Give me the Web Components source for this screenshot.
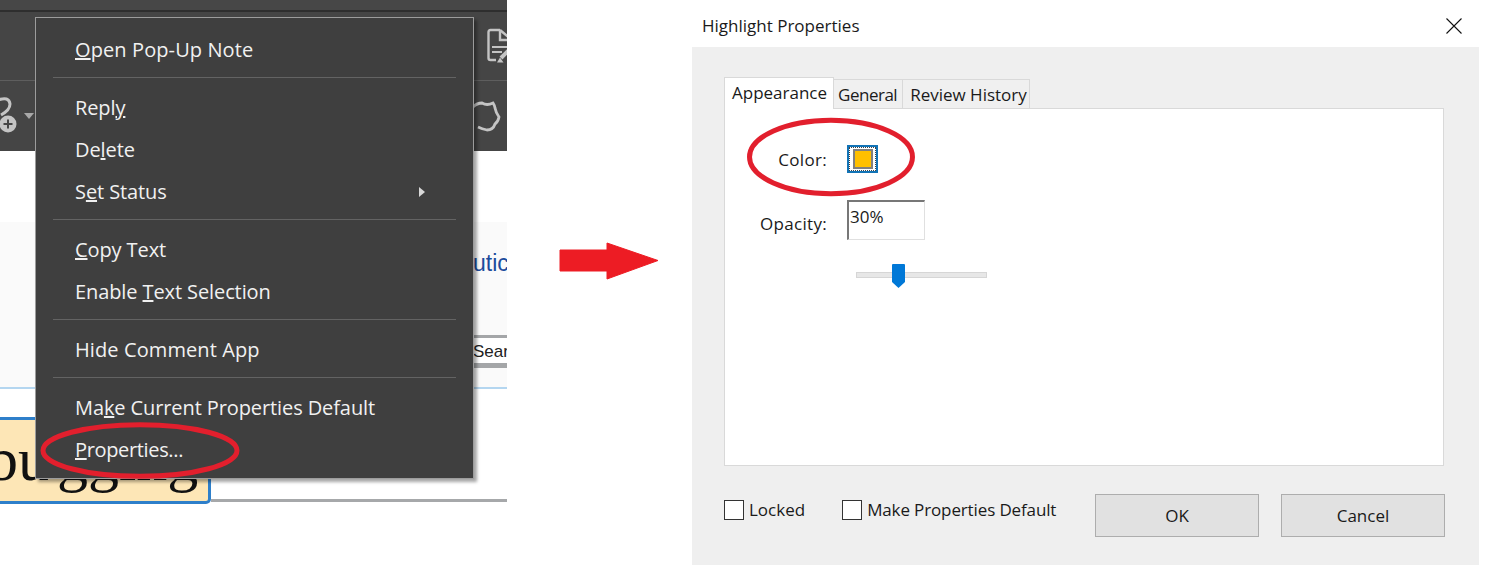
<!DOCTYPE html>
<html>
<head>
<meta charset="utf-8">
<title>Highlight Properties</title>
<style>
  html, body { margin: 0; background: #fff; }
  body { width: 1495px; height: 578px; overflow: hidden; font-family: "Open Sans", "Liberation Sans", sans-serif; }
</style>
</head>
<body>
<app-shell>
  <pdf-backdrop slot="left">
    <context-menu>
      <menu-item style="letter-spacing:.1px"><u>O</u>pen Pop-Up Note</menu-item>
      <menu-separator></menu-separator>
      <menu-item>Repl<u>y</u></menu-item>
      <menu-item>De<u>l</u>ete</menu-item>
      <menu-item submenu>S<u>e</u>t Status</menu-item>
      <menu-separator></menu-separator>
      <menu-item><u>C</u>opy Text</menu-item>
      <menu-item>Enable <u>T</u>ext Selection</menu-item>
      <menu-separator></menu-separator>
      <menu-item style="letter-spacing:.1px">Hide Comment App</menu-item>
      <menu-separator></menu-separator>
      <menu-item>Ma<u>k</u>e Current Properties Default</menu-item>
      <menu-item style="letter-spacing:-.35px"><u>P</u>roperties...</menu-item>
    </context-menu>
    <callout-ellipse style="left:40px;top:423px;width:200px;height:55px"></callout-ellipse>
  </pdf-backdrop>
  <flow-arrow slot="middle"></flow-arrow>
  <properties-dialog slot="right" heading="Highlight Properties">
    <dialog-tab slot="tabs" active>Appearance</dialog-tab>
    <dialog-tab slot="tabs" style="padding:0 5px 0 4px;letter-spacing:-.5px">General</dialog-tab>
    <dialog-tab slot="tabs" style="padding:0 2px 0 7px">Review History</dialog-tab>
    <appearance-pane slot="pane"></appearance-pane>
    <check-box slot="footer" style="margin-right:37px">Locked</check-box>
    <check-box slot="footer" style="letter-spacing:-.13px">Make Properties Default</check-box>
    <push-button slot="actions">OK</push-button>
    <push-button slot="actions">Cancel</push-button>
  </properties-dialog>
</app-shell>

<script>
class AppShell extends HTMLElement {
  constructor() {
    super();
    this.attachShadow({ mode: "open" });
    this.shadowRoot.innerHTML = `
      <style>
        :host { display: flex; width: 1495px; height: 578px; color: #1a1a1a; }
        .middle { width: 185px; }
        .right { width: 787px; }
      </style>
      <slot name="left"></slot>
      <div class="middle"><slot name="middle"></slot></div>
      <div class="right"><slot name="right"></slot></div>
    `;
  }
}

class PdfBackdrop extends HTMLElement {
  constructor() {
    super();
    this.attachShadow({ mode: "open" });
    this.shadowRoot.innerHTML = `
      <style>
        :host { display: block; position: relative; width: 507px; height: 578px; overflow: hidden; flex: none; }
        .strip { height: 10px; background: #474747; border-bottom: 2px solid #2e2e2e; }
        .bar { box-sizing: border-box; display: flex; justify-content: space-between; align-items: center; background: #454545; }
        .bar-top { height: 69px; border-bottom: 1px solid #5e5e5e; }
        .bar-bottom { height: 70px; }
        .bar-top svg { margin-left: auto; margin-right: -12px; flex: none; }
        .left-tool { display: flex; align-items: center; gap: 7px; }
        .caret { width: 0; height: 0; border: 5px solid transparent; border-top: 6px solid #a8a8a8; border-bottom: 0; }
        .band { box-sizing: border-box; height: 167px; margin-top: 71px; padding: 26px 0 0 473px; background: #fafafa; border-bottom: 2px solid #b4d6f0; overflow: hidden; }
        .link { display: block; font: 23px/30px "Liberation Sans", sans-serif; color: #1d4c9c; white-space: nowrap; }
        .search { box-sizing: border-box; height: 33px; margin: 57px 0 0 0; border-top: 3px solid #a4a6a8; border-bottom: 5px solid #a4a6a8; font: 17px/28px "Liberation Sans", sans-serif; color: #222; white-space: nowrap; background: #fff; overflow: hidden; }
        .word-row { display: flex; align-items: flex-end; margin-top: 28px; }
        .word { box-sizing: border-box; width: 211px; height: 87px; padding-top: 8px; background: #fde6b6; border: 3px solid #2e7fca; border-left: 0; border-radius: 0 0 5px 0; overflow: hidden; font: 62px/1 "Liberation Serif", serif; color: #111; text-indent: -13px; white-space: nowrap; }
        .word span { margin-right: 8px; }
        .rule { flex: 1; height: 3px; background: #a6a8aa; margin-bottom: 2px; }
      </style>
      <div class="strip"></div>
      <div class="bar bar-top">
        <svg width="32" height="38" viewBox="0 0 32 38" fill="none" stroke="#c4c4c4" stroke-width="2.400">
          <path d="M13 3H3.500Q1.500 3 1.500 5V31Q1.500 33 3.500 33H9"/>
          <path d="M13 3L25 13V16"/><path d="M13 3V13H25"/>
          <path d="M5 20H21M5 25H15" stroke-width="2"/>
          <path d="M14 31L24 21" stroke-width="4"/>
          <path d="M10 35.500L13 30.500L16.500 35.500Z" fill="#c4c4c4" stroke="none"/>
        </svg>
      </div>
      <div class="bar bar-bottom">
        <div class="left-tool">
          <svg width="17" height="38" viewBox="0 0 17 38">
            <path d="M-2 3Q9 -1 10 7Q10 13 1 18" fill="none" stroke="#c4c4c4" stroke-width="3"/>
            <circle cx="8" cy="27" r="8.500" fill="#c4c4c4"/>
            <path d="M8 22.500V31.500M3.500 27H12.500" stroke="#454545" stroke-width="2"/>
          </svg>
          <span class="caret"></span>
        </div>
        <svg width="36" height="32" viewBox="0 0 36 32" fill="none" stroke="#c4c4c4" stroke-width="2.800" style="flex:none;margin-right:6px">
          <path d="M8 7Q12 3 17 3Q22 6 28 3Q30 6 30 8Q31 13 34 17Q33 22 30 24Q28 30 22 30Q17 29 13 27"/>
        </svg>
      </div>
      <div class="band">
        <span class="link">utic</span>
        <div class="search">Sear</div>
      </div>
      <div class="word-row">
        <div class="word"><span>bu</span>gging</div>
        <div class="rule"></div>
      </div>
      <slot></slot>
    `;
  }
}

class ContextMenu extends HTMLElement {
  constructor() {
    super();
    this.attachShadow({ mode: "open" });
    this.shadowRoot.innerHTML = `
      <style>
        /* floats over the document like the real popup */
        :host {
          position: absolute; left: 35px; top: 17px; box-sizing: border-box;
          display: block; width: 439px; height: 462px; padding: 11px 0 0;
          background: #3f3f3f; border: 1px solid #9c9c9c;
          box-shadow: 3px 3px 3px rgba(0, 0, 0, .35);
        }
      </style>
      <slot></slot>
    `;
  }
}

class MenuItem extends HTMLElement {
  constructor() {
    super();
    this.attachShadow({ mode: "open" });
    this.shadowRoot.innerHTML = `
      <style>
        :host {
          display: flex; align-items: center; justify-content: space-between;
          height: 42px; padding: 0 48px 0 39px;
          font: 20px/42px "Open Sans", sans-serif; letter-spacing: -.1px; color: #f1f1f1; white-space: nowrap;
        }
        .arrow { display: none; width: 0; height: 0; border: 5px solid transparent; border-left: 6px solid #d8d8d8; border-right: 0; }
        :host([submenu]) .arrow { display: block; }
      </style>
      <span><slot></slot></span><span class="arrow"></span>
    `;
  }
}

class MenuSeparator extends HTMLElement {
  constructor() {
    super();
    this.attachShadow({ mode: "open" });
    this.shadowRoot.innerHTML = `
      <style>
        :host { display: block; height: 1px; margin: 6px 17px 9px 17px; background: #636363; }
      </style>
    `;
  }
}

class CalloutEllipse extends HTMLElement {
  constructor() {
    super();
    this.attachShadow({ mode: "open" });
    this.shadowRoot.innerHTML = `
      <style>
        :host { position: absolute; display: block; pointer-events: none; }
        svg { display: block; width: 100%; height: 100%; overflow: visible; }
      </style>
      <svg preserveAspectRatio="none" viewBox="0 0 100 100">
        <ellipse cx="50" cy="50" rx="48.500" ry="47" fill="none" stroke="#e21f2d" stroke-width="5" vector-effect="non-scaling-stroke"/>
      </svg>
    `;
  }
}

class FlowArrow extends HTMLElement {
  constructor() {
    super();
    this.attachShadow({ mode: "open" });
    this.shadowRoot.innerHTML = `
      <style>
        :host { display: block; padding: 242px 0 0 52px; }
        svg { display: block; }
      </style>
      <svg width="99" height="38" viewBox="0 0 99 38">
        <path d="M1 8H48V1L99 18.500L48 37V29H1Z" fill="#ed1c24" stroke="#ed1c24" stroke-width="1" stroke-linejoin="round"/>
      </svg>
    `;
  }
}

class PropertiesDialog extends HTMLElement {
  constructor() {
    super();
    this.attachShadow({ mode: "open" });
    this.shadowRoot.innerHTML = `
      <style>
        :host { display: block; width: 787px; font: 17px/24px "Open Sans", sans-serif; color: #1a1a1a; }
        header { display: flex; justify-content: space-between; align-items: center; height: 47px; padding: 5px 17px 0 10px; box-sizing: border-box; }
        h1 { margin: 0; font: inherit; }
        .panel { box-sizing: border-box; height: 518px; padding: 30px 35px 28px 32px; background: #efefef; }
        .tabs { display: flex; align-items: flex-end; height: 31px; }
        .pane { height: 358px; box-sizing: border-box; background: #fff; border: 1px solid #d9d9d9; }
        .bottom { display: flex; justify-content: space-between; align-items: center; margin: 28px -1px 0 0; height: 43px; }
        .left, .actions { display: flex; align-items: center; }
        .left { margin-top: -12px; }
        .actions { gap: 22px; }
      </style>
      <header>
        <h1>${this.getAttribute("heading")}</h1>
        <svg width="16" height="16" viewBox="0 0 16 16" stroke="#111" stroke-width="1.100"><path d="M.500.500L15.500 15.500M15.500.500L.500 15.500"/></svg>
      </header>
      <div class="panel">
        <div class="tabs"><slot name="tabs"></slot></div>
        <div class="pane"><slot name="pane"></slot></div>
        <div class="bottom">
          <div class="left"><slot name="footer"></slot></div>
          <div class="actions"><slot name="actions"></slot></div>
        </div>
      </div>
    `;
  }
}

class DialogTab extends HTMLElement {
  constructor() {
    super();
    this.attachShadow({ mode: "open" });
    this.shadowRoot.innerHTML = `
      <style>
        :host {
          display: block; box-sizing: border-box; height: 29px; padding: 0 4px;
          background: #f0f0f0; border: 1px solid #d9d9d9; border-bottom: 0; border-left: 0;
          line-height: 30px; white-space: nowrap;
        }
        :host([active]) {
          height: 32px; padding: 0 6px 0 7px; margin-bottom: -1px; background: #fff;
          border-left: 1px solid #d9d9d9; line-height: 30px; position: relative;
        }
      </style>
      <slot></slot>
    `;
  }
}

class AppearancePane extends HTMLElement {
  constructor() {
    super();
    this.attachShadow({ mode: "open" });
    this.shadowRoot.innerHTML = `
      <style>
        :host { display: block; position: relative; padding: 36px 0 0 0; }
        .grid { display: grid; grid-template-columns: 102px auto; column-gap: 20px; row-gap: 27px; justify-content: start; align-items: center; }
        label { text-align: right; }
        label.color { padding-top: 1px; letter-spacing: .3px; }
        label.opacity { padding-top: 8px; letter-spacing: .3px; }
        .swatch { box-sizing: border-box; width: 31px; height: 28px; border: 2px solid #1173b6; }
        .swatch div { box-sizing: border-box; display: flex; align-items: center; justify-content: center; height: 100%; background: #fff; border: 1px dotted #444; }
        .swatch span { display: block; box-sizing: border-box; width: 20px; height: 20px; background: #ffc000; border: 2px solid #808080; }
        .input { box-sizing: border-box; width: 78px; height: 40px; border: 1px solid #e0e0e0; border-top: 2px solid #777; border-left: 2px solid #777; padding: 0 0 0 1px; line-height: 30px; }
        .slider { position: relative; height: 6px; width: 131px; margin: 32px 0 0 131px; box-sizing: border-box; background: #e7e7e7; border: 1px solid #d6d6d6; }
        svg { position: absolute; left: 35px; top: -9px; }
      </style>
      <div class="grid">
        <label class="color">Color:</label>
        <div class="swatch"><div><span></span></div></div>
        <label class="opacity">Opacity:</label>
        <div class="input">30%</div>
      </div>
      <div class="slider">
        <svg width="13" height="24" viewBox="0 0 13 24"><path d="M0 1Q0 0 1 0H12Q13 0 13 1V18L6.500 24L0 18Z" fill="#0078d7"/></svg>
      </div>
      <callout-ellipse style="left:22px;top:9px;width:168px;height:78px"></callout-ellipse>
    `;
  }
}

class CheckBox extends HTMLElement {
  constructor() {
    super();
    this.attachShadow({ mode: "open" });
    this.shadowRoot.innerHTML = `
      <style>
        :host { display: flex; align-items: center; gap: 5px; white-space: nowrap; }
        .box { box-sizing: border-box; width: 20px; height: 20px; background: #fff; border: 1px solid #333; }
      </style>
      <span class="box"></span><slot></slot>
    `;
  }
}

class PushButton extends HTMLElement {
  constructor() {
    super();
    this.attachShadow({ mode: "open" });
    this.shadowRoot.innerHTML = `
      <style>
        :host { display: flex; align-items: center; justify-content: center; box-sizing: border-box; width: 164px; height: 43px; background: #e1e1e1; border: 1px solid #adadad; }
      </style>
      <slot></slot>
    `;
  }
}

customElements.define("app-shell", AppShell);
customElements.define("pdf-backdrop", PdfBackdrop);
customElements.define("context-menu", ContextMenu);
customElements.define("menu-item", MenuItem);
customElements.define("menu-separator", MenuSeparator);
customElements.define("callout-ellipse", CalloutEllipse);
customElements.define("flow-arrow", FlowArrow);
customElements.define("properties-dialog", PropertiesDialog);
customElements.define("dialog-tab", DialogTab);
customElements.define("appearance-pane", AppearancePane);
customElements.define("check-box", CheckBox);
customElements.define("push-button", PushButton);
</script>
</body>
</html>
